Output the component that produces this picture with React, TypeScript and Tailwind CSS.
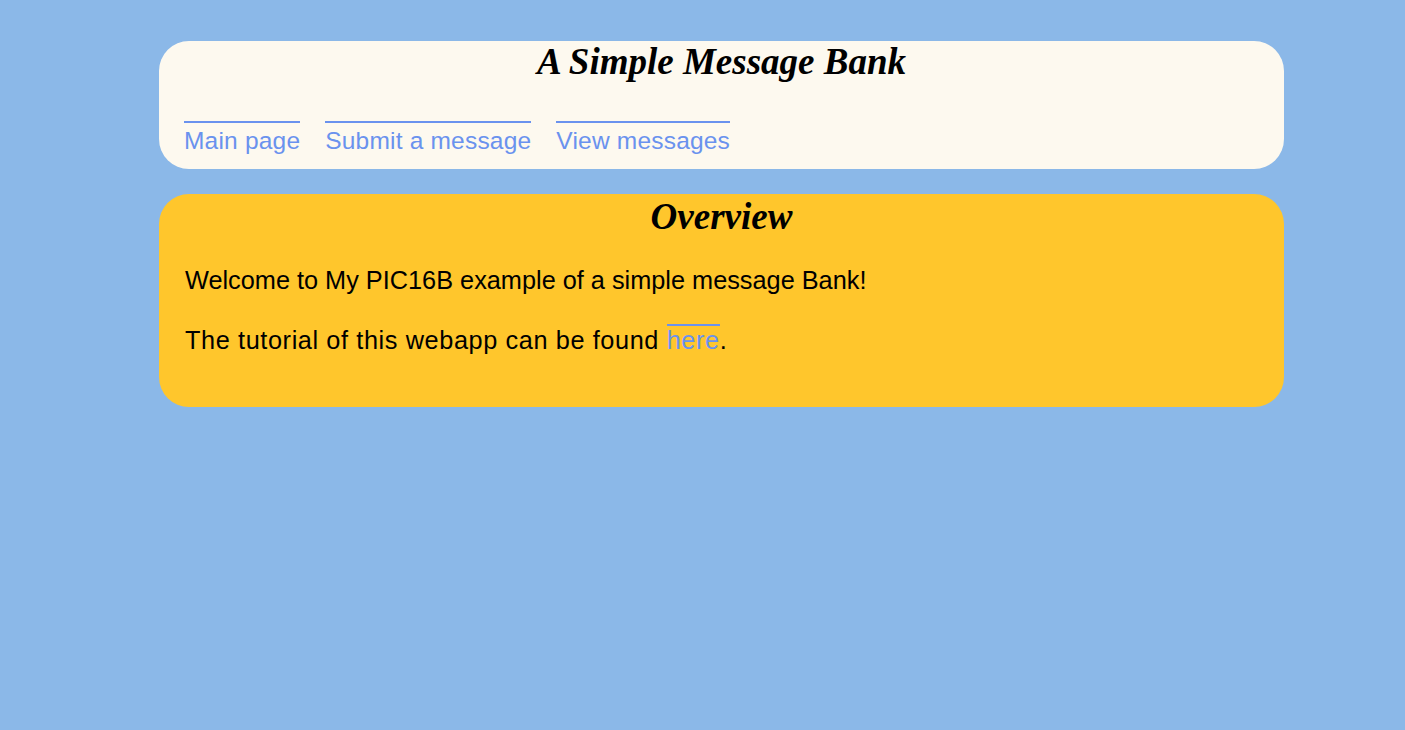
import React from 'react';

const links = ['Main page', 'Submit a message', 'View messages'];

const App = () => {
  const comic = "font-['Liberation_Sans',sans-serif]";
  return (
    <div className="min-h-screen bg-[#8bb8e8] pt-[41px]">
      <div className="ml-[159px] w-[1125px] rounded-[30px] bg-[#fdf9ef] px-[25px] pb-[10px]">
        <h1 className="text-center font-['Liberation_Serif',serif] text-[37px] font-bold italic leading-[42px] text-black">
          A Simple Message Bank
        </h1>
        <nav className={`mt-[38px] flex gap-[25px] ${comic}`}>
          {links.map((l) => (
            <a key={l} href="#" className="border-t-2 border-[#6a92ee] text-[24.5px] leading-[36px] tracking-[0.2px] text-[#6a92ee]">
              {l}
            </a>
          ))}
        </nav>
      </div>

      <div className="ml-[159px] mt-[25px] w-[1125px] rounded-[30px] bg-[#ffc62c] px-[26px] pb-[51px]">
        <h2 className="pt-[2px] text-center font-['Liberation_Serif',serif] text-[37px] font-bold italic leading-[42px] text-black">
          Overview
        </h2>
        <div className={`${comic} text-[25.3px] leading-[32px] text-black`}>
          <p className="mt-[26px]">Welcome to My PIC16B example of a simple message Bank!</p>
          <p className="mt-[28px] tracking-[0.6px]">
            The tutorial of this webapp can be found{' '}
            <a href="#" className="border-t-2 border-[#6a92ee] text-[#6a92ee]">here</a>.
          </p>
        </div>
      </div>
    </div>
  );
};

export default App;
